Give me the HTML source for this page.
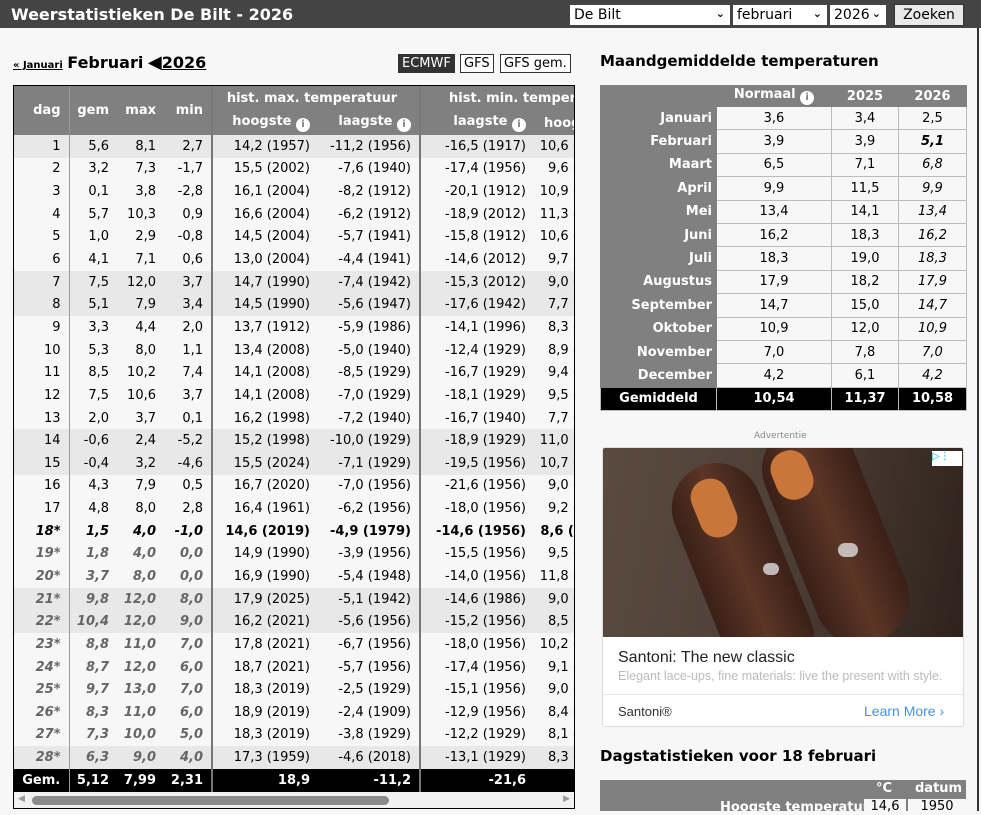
<!DOCTYPE html>
<html><head><meta charset="utf-8"><style>
*{box-sizing:border-box;margin:0;padding:0}
body{width:981px;height:811px;overflow:hidden;background:#f7f7f7;font-family:"DejaVu Sans",Verdana,sans-serif;font-size:13px;color:#000;position:relative}
.top{position:absolute;left:0;top:0;width:981px;height:28px;background:#444;}
.top h1{position:absolute;left:11px;top:5px;color:#fff;font-size:16px;font-weight:bold}
.sel{position:absolute;top:5px;height:20px;background:#fff;font-size:14px;padding:1px 4px;line-height:18px}
.sel i{position:absolute;right:5px;top:0;font-style:normal;font-size:11px;font-weight:bold}
.btn{position:absolute;left:894px;top:4px;width:70px;height:22px;background:#e9e9e9;border:1px solid #333;font-size:14px;text-align:center;line-height:20px}
.rb{position:absolute;left:977px;top:28px;width:2px;height:783px;background:#333}
.nav{position:absolute;left:13px;top:52px;font-weight:bold}
.nav small{font-size:10px;text-decoration:underline}
.nav b{font-size:16px}
.mb{position:absolute;top:54px;height:19px;border:1px solid #333;font-size:13px;line-height:17px;padding:0 3px;background:#fff}
.wrap{position:absolute;left:13px;top:85px;width:562px;height:724px;border:1px solid #000;overflow:hidden;background:#f7f7f7}
table{border-collapse:collapse;table-layout:fixed}
#t td,#t th{height:22.65px;text-align:right;padding:0 8px 0 0;white-space:nowrap;border-left:1px solid #999}
#t th{background:#808080;color:#fff;font-weight:bold}
#t .tk{border-left:2px solid #777}
#t tr.w td{background:#e8e8e8}
#t tr.b td{font-weight:bold}
#t tr.b td.g{font-style:italic}
#t tr.f td.g{font-weight:bold;font-style:italic;color:#666}
#t tr.gem td{background:#000;color:#fff;font-weight:bold;height:23px}
.ic{display:inline-block;width:14px;height:14px;border-radius:7px;background:#fff;color:#808080;font-size:10px;line-height:14px;text-align:center;vertical-align:-2px;font-weight:bold}
.sb{position:absolute;left:0;top:706px;width:560px;height:17px;background:#f1f1f1}
.sb .th{position:absolute;left:18px;top:4px;width:357px;height:9px;border-radius:5px;background:#8a8a8a}
h2{position:absolute;font-size:15px;font-weight:bold;left:600px}
#m{position:absolute;left:600px;top:85px;width:366px}
#m td,#m th{height:23.4px;border:1px solid #bbb;text-align:center;background:#f7f7f7}
#m th{background:#808080;color:#fff;border-color:#808080;height:21px}
#m td.l{background:#808080;color:#fff;font-weight:bold;text-align:right;padding-right:4px;border-color:#808080}
#m td.it{font-style:italic}
#m tr.gm td{background:#000;color:#fff;font-weight:bold;border-color:#bbb}
.ad{position:absolute;left:602px;top:447px;width:362px;height:280px;background:#fff;border:1px solid #ddd;border-radius:3px;overflow:hidden}
.img{position:absolute;left:0;top:0;width:362px;height:189px;background:linear-gradient(100deg,#5a4a40 0%,#4e3f36 50%,#2e221c 100%);overflow:hidden}
.sh{position:absolute;border-radius:45px;background:linear-gradient(90deg,#3a2018,#5c3626 50%,#3a2018)}
</style></head><body>
<div class="top"><h1>Weerstatistieken De Bilt - 2026</h1>
<div class="sel" style="left:570px;width:160px">De Bilt<i>⌄</i></div>
<div class="sel" style="left:733px;width:94px">februari<i>⌄</i></div>
<div class="sel" style="left:830px;width:56px">2026<i>⌄</i></div>
<div class="btn">Zoeken</div></div>
<div class="rb"></div>
<div class="nav"><small>« Januari</small> <b>Februari</b> <b style="font-size:18px">◀</b><b style="text-decoration:underline">2026</b></div>
<div class="mb" style="left:398px;background:#333;color:#fff">ECMWF</div>
<div class="mb" style="left:460px">GFS</div>
<div class="mb" style="left:500px">GFS gem.</div>
<div class="wrap">
<table id="t" style="width:610px">
<colgroup><col style="width:55px"><col style="width:48px"><col style="width:47px"><col style="width:48px"><col style="width:106px"><col style="width:102px"><col style="width:114px"><col style="width:90px"></colgroup>
<tr style="height:25px"><th rowspan="2" style="border-left:0">dag</th><th rowspan="2">gem</th><th rowspan="2" style="border-left:0">max</th><th rowspan="2" style="border-left:0">min</th><th colspan="2" class="tk" style="text-align:center">hist. max. temperatuur</th><th colspan="2" class="tk" style="text-align:left;padding-left:28px">hist. min. temperatuur</th></tr>
<tr style="height:24px"><th class="tk">hoogste <span class="ic">i</span></th><th style="border-left:0">laagste <span class="ic">i</span></th><th class="tk">laagste <span class="ic">i</span></th><th style="border-left:0;text-align:left;padding-left:10px">hoogste</th></tr>
</table>
<div style="position:absolute;left:0;top:49px">
<table id="t2"></table></div>
<div class="sb"><span style="position:absolute;left:4px;top:2px;font-size:9px;color:#999">◀</span><div class="th"></div><span style="position:absolute;right:4px;top:2px;font-size:9px;color:#999">▶</span></div>
</div>
<h2 style="top:52px">Maandgemiddelde temperaturen</h2>
<table id="m"><colgroup><col style="width:116px"><col style="width:115px"><col style="width:67px"><col style="width:68px"></colgroup>
<tr><th></th><th>Normaal <span class="ic">i</span></th><th>2025</th><th>2026</th></tr>
<tr><td class="l">Januari</td><td>3,6</td><td>3,4</td><td>2,5</td></tr>
<tr><td class="l">Februari</td><td>3,9</td><td>3,9</td><td class="it"><b>5,1</b></td></tr>
<tr><td class="l">Maart</td><td>6,5</td><td>7,1</td><td class="it">6,8</td></tr>
<tr><td class="l">April</td><td>9,9</td><td>11,5</td><td class="it">9,9</td></tr>
<tr><td class="l">Mei</td><td>13,4</td><td>14,1</td><td class="it">13,4</td></tr>
<tr><td class="l">Juni</td><td>16,2</td><td>18,3</td><td class="it">16,2</td></tr>
<tr><td class="l">Juli</td><td>18,3</td><td>19,0</td><td class="it">18,3</td></tr>
<tr><td class="l">Augustus</td><td>17,9</td><td>18,2</td><td class="it">17,9</td></tr>
<tr><td class="l">September</td><td>14,7</td><td>15,0</td><td class="it">14,7</td></tr>
<tr><td class="l">Oktober</td><td>10,9</td><td>12,0</td><td class="it">10,9</td></tr>
<tr><td class="l">November</td><td>7,0</td><td>7,8</td><td class="it">7,0</td></tr>
<tr><td class="l">December</td><td>4,2</td><td>6,1</td><td class="it">4,2</td></tr>
<tr class="gm"><td style="text-align:center">Gemiddeld</td><td>10,54</td><td>11,37</td><td>10,58</td></tr>
</table>
<div style="position:absolute;left:754px;top:431px;font-size:9px;color:#888">Advertentie</div>
<div class="ad"><div class="img">
<div class="sh" style="left:95px;top:10px;width:90px;height:230px;transform:rotate(-22deg)"></div>
<div class="sh" style="left:185px;top:-30px;width:95px;height:230px;transform:rotate(-22deg)"></div>
<div style="position:absolute;left:92px;top:30px;width:38px;height:60px;border-radius:18px;background:#c8763a;transform:rotate(-22deg)"></div>
<div style="position:absolute;left:170px;top:2px;width:38px;height:50px;border-radius:18px;background:#c8763a;transform:rotate(-22deg)"></div>
<div style="position:absolute;left:160px;top:115px;width:16px;height:12px;border-radius:8px;background:#ddd;opacity:.8"></div>
<div style="position:absolute;left:235px;top:95px;width:20px;height:14px;border-radius:8px;background:#ddd;opacity:.8"></div>
<div style="position:absolute;right:3px;top:3px;width:30px;height:15px;background:#fff;color:#0af;font-size:10px">▷⋮</div></div>
<div style="position:absolute;left:15px;top:201px;font-size:16px;font-family:'Liberation Sans',sans-serif;color:#222">Santoni: The new classic</div>
<div style="position:absolute;left:15px;top:221px;font-size:12.5px;font-family:'Liberation Sans',sans-serif;color:#bbb;white-space:nowrap">Elegant lace-ups, fine materials: live the present with style.</div>
<div style="position:absolute;left:0;top:246px;width:362px;border-top:1px solid #e5e5e5"></div>
<div style="position:absolute;left:15px;top:256px;font-size:13px;font-family:'Liberation Sans',sans-serif;color:#333">Santoni®</div>
<div style="position:absolute;left:261px;top:255px;font-size:14px;font-family:'Liberation Sans',sans-serif;color:#4a90e2">Learn More ›</div>
</div>
<h2 style="top:747px">Dagstatistieken voor 18 februari</h2>
<div style="position:absolute;left:600px;top:780px;width:366px;height:31px;background:#808080;color:#fff;font-weight:bold">
<span style="position:absolute;left:276px;top:1px">°C</span><span style="position:absolute;left:315px;top:1px">datum</span>
<span style="position:absolute;left:120px;top:20px">Hoogste temperatuur</span>
<span style="position:absolute;left:264px;top:19px;width:42px;height:14px;background:#f7f7f7;color:#000;font-weight:normal;text-align:center">14,6</span>
<span style="position:absolute;left:308px;top:19px;width:58px;height:14px;background:#f7f7f7;color:#000;font-weight:normal;text-align:center">1950</span></div>
<script>
var d=`1|5,6|8,1|2,7|14,2 (1957)|-11,2 (1956)|-16,5 (1917)|10,6 (1990)
2|3,2|7,3|-1,7|15,5 (2002)|-7,6 (1940)|-17,4 (1956)|9,6 (1990)
3|0,1|3,8|-2,8|16,1 (2004)|-8,2 (1912)|-20,1 (1912)|10,9 (1990)
4|5,7|10,3|0,9|16,6 (2004)|-6,2 (1912)|-18,9 (2012)|11,3 (1990)
5|1,0|2,9|-0,8|14,5 (2004)|-5,7 (1941)|-15,8 (1912)|10,6 (1990)
6|4,1|7,1|0,6|13,0 (2004)|-4,4 (1941)|-14,6 (2012)|9,7 (1990)
7|7,5|12,0|3,7|14,7 (1990)|-7,4 (1942)|-15,3 (2012)|9,0 (1990)
8|5,1|7,9|3,4|14,5 (1990)|-5,6 (1947)|-17,6 (1942)|7,7 (1990)
9|3,3|4,4|2,0|13,7 (1912)|-5,9 (1986)|-14,1 (1996)|8,3 (1990)
10|5,3|8,0|1,1|13,4 (2008)|-5,0 (1940)|-12,4 (1929)|8,9 (1990)
11|8,5|10,2|7,4|14,1 (2008)|-8,5 (1929)|-16,7 (1929)|9,4 (1990)
12|7,5|10,6|3,7|14,1 (2008)|-7,0 (1929)|-18,1 (1929)|9,5 (1990)
13|2,0|3,7|0,1|16,2 (1998)|-7,2 (1940)|-16,7 (1940)|7,7 (1990)
14|-0,6|2,4|-5,2|15,2 (1998)|-10,0 (1929)|-18,9 (1929)|11,0 (1990)
15|-0,4|3,2|-4,6|15,5 (2024)|-7,1 (1929)|-19,5 (1956)|10,7 (1990)
16|4,3|7,9|0,5|16,7 (2020)|-7,0 (1956)|-21,6 (1956)|9,0 (1990)
17|4,8|8,0|2,8|16,4 (1961)|-6,2 (1956)|-18,0 (1956)|9,2 (1990)
18*|1,5|4,0|-1,0|14,6 (2019)|-4,9 (1979)|-14,6 (1956)|8,6 (1990)
19*|1,8|4,0|0,0|14,9 (1990)|-3,9 (1956)|-15,5 (1956)|9,5 (1990)
20*|3,7|8,0|0,0|16,9 (1990)|-5,4 (1948)|-14,0 (1956)|11,8 (1990)
21*|9,8|12,0|8,0|17,9 (2025)|-5,1 (1942)|-14,6 (1986)|9,0 (1990)
22*|10,4|12,0|9,0|16,2 (2021)|-5,6 (1956)|-15,2 (1956)|8,5 (1990)
23*|8,8|11,0|7,0|17,8 (2021)|-6,7 (1956)|-18,0 (1956)|10,2 (1990)
24*|8,7|12,0|6,0|18,7 (2021)|-5,7 (1956)|-17,4 (1956)|9,1 (1990)
25*|9,7|13,0|7,0|18,3 (2019)|-2,5 (1929)|-15,1 (1956)|9,0 (1990)
26*|8,3|11,0|6,0|18,9 (2019)|-2,4 (1909)|-12,9 (1956)|8,4 (1990)
27*|7,3|10,0|5,0|18,3 (2019)|-3,8 (1929)|-12,2 (1929)|8,1 (1990)
28*|6,3|9,0|4,0|17,3 (1959)|-4,6 (2018)|-13,1 (1929)|8,3 (1990)
Gem.|5,12|7,99|2,31|18,9|-11,2|-21,6|`.split("\n");
var we=[1,7,8,14,15,21,22,28];
var h='<colgroup><col style="width:55px"><col style="width:48px"><col style="width:47px"><col style="width:48px"><col style="width:106px"><col style="width:102px"><col style="width:114px"><col style="width:90px"></colgroup>';
d.forEach(function(l,i){var c=l.split("|"),n=i+1,cls=[];
if(we.indexOf(n)>=0)cls.push("w");if(n==18)cls.push("b");if(n>18&&n<29)cls.push("f");if(n==29)cls.push("gem");
h+='<tr class="'+cls.join(" ")+'">';
c.forEach(function(v,j){var s='';if(j==0)s=' style="border-left:0"';if(j==2||j==3||j==5||j==7)s=' style="border-left:0"';
var k=(j<4?'g':'')+(j==4||j==6?' tk':'');if(n==29&&j==0)s=' style="border-left:0;text-align:center;padding:0"';
h+='<td class="'+k+'"'+s+'>'+v+'</td>';});h+='</tr>';});
var t=document.getElementById("t2");t.id="t";t.style.width="610px";t.innerHTML=h;
</script>
</body></html>
